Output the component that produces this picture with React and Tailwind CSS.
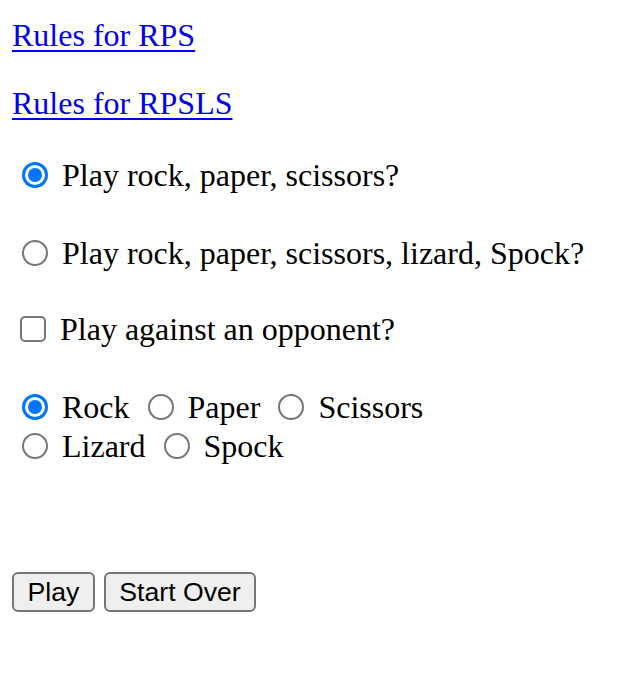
import React from "react";

function Radio({ checked, className = "" }) {
  if (checked) {
    return (
      <span className={`flex h-[26px] w-[26px] shrink-0 items-center justify-center rounded-full bg-[#0075ff] ${className}`}>
        <span className="flex h-[20px] w-[20px] items-center justify-center rounded-full bg-white">
          <span className="h-[14px] w-[14px] rounded-full bg-[#0075ff]" />
        </span>
      </span>
    );
  }
  return (
    <span className={`h-[26px] w-[26px] shrink-0 rounded-full border-2 border-[#767676] bg-white ${className}`} />
  );
}

function Choice({ checked, label }) {
  return (
    <span className="flex items-center">
      <Radio checked={checked} className="ml-[10px] mr-[14px]" />
      <span className="mr-[8px]">{label}</span>
    </span>
  );
}

export default function App() {
  return (
    <div className="min-h-[690px] w-[640px] bg-white pl-[12px] pt-[17px] font-['Liberation_Serif','Times_New_Roman',serif] text-[32px] text-black">
      <div className="h-[36px] leading-[36px]">
        <a href="#" className="text-[#0000ee] underline decoration-[2px] underline-offset-[4px]">
          Rules for RPS
        </a>
      </div>
      <div className="mt-[32px] h-[36px] leading-[36px]">
        <a href="#" className="text-[#0000ee] underline decoration-[2px] underline-offset-[4px]">
          Rules for RPSLS
        </a>
      </div>

      <div className="mt-[36px] flex h-[36px] items-center leading-[36px]">
        <Radio checked className="ml-[10px] mr-[14px]" />
        <span>Play rock, paper, scissors?</span>
      </div>

      <div className="mt-[42px] flex h-[36px] items-center leading-[36px]">
        <Radio className="ml-[10px] mr-[14px]" />
        <span>Play rock, paper, scissors, lizard, Spock?</span>
      </div>

      <div className="mt-[40px] flex h-[36px] items-center leading-[36px]">
        <span className="ml-[8px] mr-[14px] h-[26px] w-[26px] shrink-0 rounded-[5px] border-2 border-[#767676] bg-white" />
        <span>Play against an opponent?</span>
      </div>

      <div className="mt-[42px] flex h-[36px] items-center leading-[36px]">
        <Choice checked label="Rock" />
        <Choice label="Paper" />
        <Choice label="Scissors" />
      </div>
      <div className="mt-[3px] flex h-[36px] items-center leading-[36px]">
        <Choice label="Lizard" />
        <Choice label="Spock" />
      </div>

      <div className="mt-[108px] flex gap-[9px] font-['Liberation_Sans',Arial,sans-serif] text-[26.67px] leading-none">
        <button className="flex h-[40px] w-[83px] items-center justify-center rounded-[6px] border-2 border-[#767676] bg-[#efefef] text-black">
          Play
        </button>
        <button className="flex h-[40px] w-[152px] items-center justify-center rounded-[6px] border-2 border-[#767676] bg-[#efefef] text-black">
          Start Over
        </button>
      </div>
    </div>
  );
}
